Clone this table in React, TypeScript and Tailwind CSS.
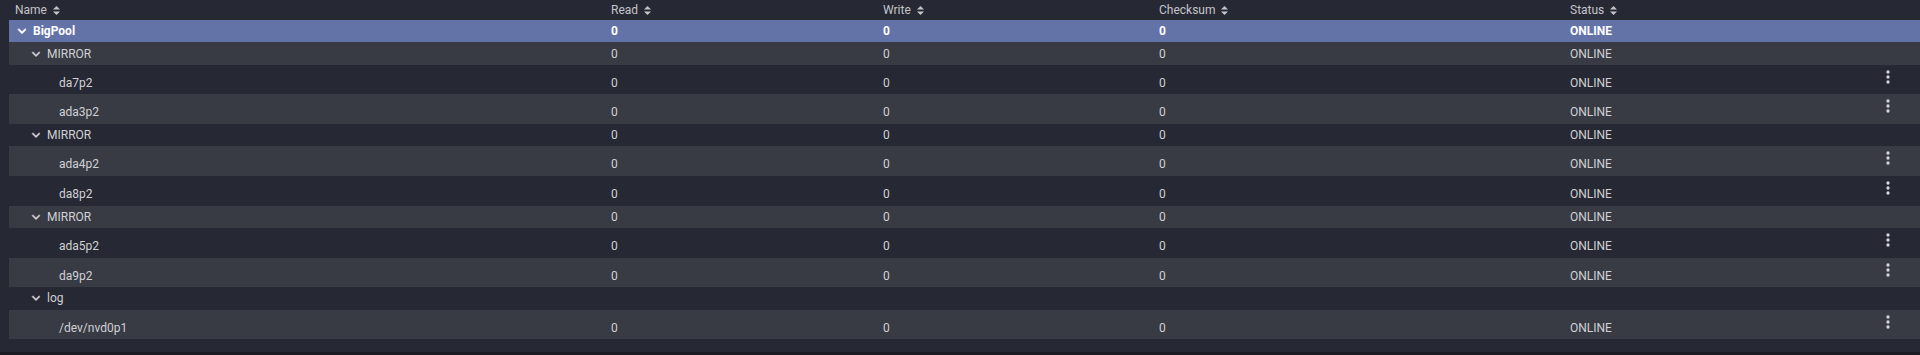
import React from "react";

type Row = {
  name: string;
  kind: "pool" | "vdev" | "disk";
  read?: string;
  write?: string;
  checksum?: string;
  status?: string;
};

const rows: Row[] = [
  { name: "BigPool", kind: "pool", read: "0", write: "0", checksum: "0", status: "ONLINE" },
  { name: "MIRROR", kind: "vdev", read: "0", write: "0", checksum: "0", status: "ONLINE" },
  { name: "da7p2", kind: "disk", read: "0", write: "0", checksum: "0", status: "ONLINE" },
  { name: "ada3p2", kind: "disk", read: "0", write: "0", checksum: "0", status: "ONLINE" },
  { name: "MIRROR", kind: "vdev", read: "0", write: "0", checksum: "0", status: "ONLINE" },
  { name: "ada4p2", kind: "disk", read: "0", write: "0", checksum: "0", status: "ONLINE" },
  { name: "da8p2", kind: "disk", read: "0", write: "0", checksum: "0", status: "ONLINE" },
  { name: "MIRROR", kind: "vdev", read: "0", write: "0", checksum: "0", status: "ONLINE" },
  { name: "ada5p2", kind: "disk", read: "0", write: "0", checksum: "0", status: "ONLINE" },
  { name: "da9p2", kind: "disk", read: "0", write: "0", checksum: "0", status: "ONLINE" },
  { name: "log", kind: "vdev" },
  { name: "/dev/nvd0p1", kind: "disk", read: "0", write: "0", checksum: "0", status: "ONLINE" },
];

function SortIcon() {
  return (
    <svg width="7" height="9" viewBox="0 0 7 9" className="ml-[6px] inline-block">
      <path d="M3.5 0 L7 3.6 L0 3.6 Z" fill="currentColor" />
      <path d="M3.5 9 L7 5.4 L0 5.4 Z" fill="currentColor" />
    </svg>
  );
}

function Chevron({ bold }: { bold?: boolean }) {
  return (
    <svg width="16" height="16" viewBox="0 0 24 24" className="shrink-0">
      <path
        d="M16.59 8.59L12 13.17 7.41 8.59 6 10l6 6 6-6z"
        fill="currentColor"
        stroke="currentColor"
        strokeWidth={bold ? 1.2 : 0.7}
        strokeLinejoin="round"
      />
    </svg>
  );
}

function MoreVert() {
  return (
    <svg width="20" height="20" viewBox="0 0 24 24">
      <circle cx="12" cy="6" r="2" fill="currentColor" />
      <circle cx="12" cy="12" r="2" fill="currentColor" />
      <circle cx="12" cy="18" r="2" fill="currentColor" />
    </svg>
  );
}

const cols = "grid grid-cols-[596px_272px_276px_411px_308px]";
const colsDisk = "grid grid-cols-[596px_272px_276px_411px_308px_48px]";

export default function App() {
  return (
    <div
      className="w-[1920px] h-[355px] bg-[#262833] flex flex-col overflow-hidden text-[12px] text-[#d0d1d4]"
      style={{ fontFamily: "Roboto, 'Noto Sans', sans-serif" }}
    >
      <div className={`${cols} ml-[9px] h-[20px] items-center text-[#c4c5ca]`}>
        {["Name", "Read", "Write", "Checksum", "Status"].map((h) => (
          <div key={h} className="pl-[6px] flex items-center">
            <span>{h}</span>
            <SortIcon />
          </div>
        ))}
      </div>
      {rows.map((r, i) => {
        const striped = i % 2 === 1;
        if (r.kind === "disk") {
          return (
            <div
              key={i}
              className={`${colsDisk} ml-[9px] h-[29.6px] ${striped ? "bg-[#383a44]" : "bg-[#262833]"}`}
            >
              <div className="pl-[50px] pt-[11px] leading-[14px]">{r.name}</div>
              <div className="pl-[6px] pt-[11px] leading-[14px]">{r.read}</div>
              <div className="pl-[6px] pt-[11px] leading-[14px]">{r.write}</div>
              <div className="pl-[6px] pt-[11px] leading-[14px]">{r.checksum}</div>
              <div className="pl-[6px] pt-[11px] leading-[14px]">{r.status}</div>
              <div className="pl-[6px] pt-[2px] text-[#d6d6d8]">
                <MoreVert />
              </div>
            </div>
          );
        }
        const pool = r.kind === "pool";
        return (
          <div
            key={i}
            className={`${cols} ml-[9px] h-[22.4px] items-center ${
              pool ? "bg-[#6373a7] text-white font-bold" : striped ? "bg-[#383a44]" : "bg-[#262833]"
            }`}
          >
            <div className={`flex items-center gap-[3px] ${pool ? "pl-[5px]" : "pl-[19px]"}`}>
              <Chevron bold={pool} />
              <span>{r.name}</span>
            </div>
            <div className="pl-[6px]">{r.read}</div>
            <div className="pl-[6px]">{r.write}</div>
            <div className="pl-[6px]">{r.checksum}</div>
            <div className="pl-[6px]">{r.status}</div>
          </div>
        );
      })}
      <div className="flex-1" />
      <div className="h-[3px] bg-[#1b1c23]" />
    </div>
  );
}
